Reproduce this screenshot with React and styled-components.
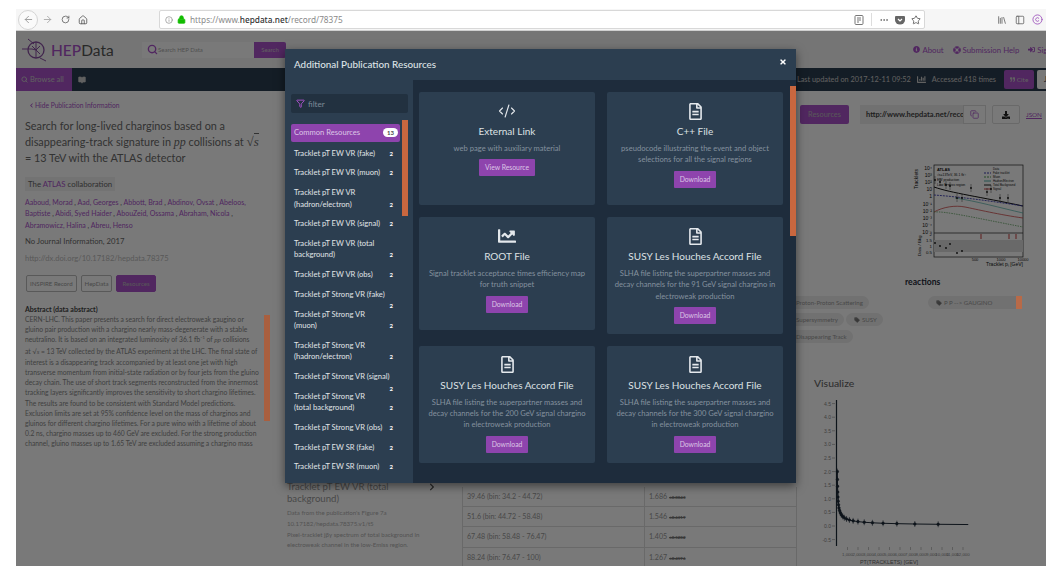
import React from "react";
import styled, { createGlobalStyle } from "styled-components";
import {
  ArrowLeft,
  ArrowRight,
  RotateCw,
  Home,
  Info,
  Lock,
  Star,
  Ellipsis,
  BookOpen,
  Search,
  Funnel,
  CodeXml,
  Copy,
  Tag,
  PanelLeft,
  Library,
  Copyright,
} from "lucide-react";
import {
  FaRegFileAlt,
  FaChartLine,
  FaTimes,
  FaInfoCircle,
  FaLifeRing,
  FaSignInAlt,
  FaQuoteRight,
  FaChartBar,
  FaDownload,
  FaChevronLeft,
  FaChevronRight,
} from "react-icons/fa";

const sans = `Lato, "Liberation Sans", sans-serif`;
const purple = "#aa52cb";

const GlobalStyle = createGlobalStyle`
  html, body {
    margin: 0;
    height: 100%;
    overflow: hidden;
    background: #fff;
  }
  * {
    box-sizing: border-box;
  }
  body {
    font-family: ${sans};
  }
`;

const Window = styled.div`
  width: 1046px;
  height: 566px;
  padding: 9px 0 0 16px;
  overflow: hidden;
  display: flex;
  flex-direction: column;
`;

/* browser toolbar */
const Toolbar = styled.div`
  height: 22px;
  flex: none;
  display: flex;
  align-items: center;
  background: #f6f6f6;
  border-bottom: 1px solid #cfcfcf;
  color: #555;
  font-family: "Noto Sans", sans-serif;
`;

const BackButton = styled.div`
  width: 20px;
  height: 20px;
  margin-left: 2px;
  border: 1px solid #d5d5d5;
  border-radius: 50%;
  background: #fafafa;
  display: flex;
  align-items: center;
  justify-content: center;
  color: #999;
`;

const NavGlyphs = styled.div`
  display: flex;
  align-items: center;
  gap: 8px;
  margin-left: 4px;
  width: 117px;
`;

const UrlBar = styled.div`
  width: 766px;
  height: 19px;
  background: #fff;
  border: 1px solid #d8d8d8;
  border-radius: 2px;
  display: flex;
  align-items: center;
  padding: 0 3px 0 5px;
  gap: 4px;
  font-size: 8.25px;
  color: #8a8a8a;
`;

const UrlText = styled.span`
  flex: 1;
  b {
    color: #333;
    font-weight: 500;
  }
`;

const Divider = styled.span`
  width: 1px;
  height: 13px;
  background: #ddd;
  margin: 0 3px;
`;

const RightGlyphs = styled.div`
  display: flex;
  align-items: center;
  gap: 7.5px;
  margin-left: 72px;
  color: #666;
`;

/* dimmed record page */
const Page = styled.div`
  position: relative;
  flex: 1;
  min-height: 0;
  overflow: hidden;
  background: #fff;
  color: #888;
`;

const Backdrop = styled.div`
  position: absolute;
  inset: 0;
  background: rgba(0, 0, 0, 0.525);
  z-index: 1;
`;

const Header = styled.header`
  height: 37px;
  display: flex;
  align-items: center;
  padding: 0 0 0 6px;
  background: #f6f6f6;
`;

const Brand = styled.div`
  display: flex;
  align-items: center;
  gap: 3px;
  width: 120px;
  font-size: 15.5px;
  color: #555;
  b {
    color: ${purple};
    font-weight: 500;
  }
`;

const SearchBox = styled.div`
  width: 112px;
  height: 16px;
  background: #fff;
  display: flex;
  align-items: center;
  padding-left: 5px;
  gap: 0;
  font-size: 6px;
  color: #aaa;
  svg {
    color: ${purple};
  }
`;

const SearchButton = styled.div`
  width: 32px;
  height: 16px;
  background: ${purple};
  color: #ccc;
  font-size: 6px;
  display: flex;
  align-items: center;
  justify-content: center;
  border-radius: 0 2px 2px 0;
`;

const HeaderLinks = styled.nav`
  margin-left: auto;
  display: flex;
  align-items: center;
  gap: 9px;
  margin-right: -14px;
  font-size: 7.8px;
  color: ${purple};
  span {
    display: flex;
    align-items: center;
    gap: 2px;
    white-space: nowrap;
  }
`;

const NavBar = styled.div`
  height: 23px;
  background: #2c3e50;
  display: flex;
  align-items: center;
  color: #ccc;
  font-size: 7.5px;
`;

const BrowseTab = styled.div`
  width: 56px;
  height: 100%;
  background: ${purple};
  display: flex;
  align-items: center;
  gap: 2px;
  padding-left: 5px;
  margin-right: 6px;
`;

const UpdateInfo = styled.div`
  margin-left: auto;
  display: flex;
  align-items: center;
  gap: 6px;
  font-size: 7.35px;
  white-space: nowrap;
`;

const CiteButton = styled.div`
  width: 30px;
  height: 19px;
  margin-left: 8px;
  background: ${purple};
  border-radius: 2px;
  display: flex;
  align-items: center;
  justify-content: center;
  gap: 2px;
  font-size: 6.5px;
`;

const StubButton = styled.div`
  width: 16px;
  height: 19px;
  margin: 0 -7px 0 3px;
  background: #fff;
  color: #333;
  border-radius: 2px;
  padding: 5px 0 0 7px;
  font-size: 7px;
`;

const Columns = styled.div`
  display: grid;
  grid-template-columns: 269px 512px 1fr;
`;

/* publication column */
const PublicationCol = styled.section`
  padding: 10px 22px 0 9px;
`;

const HideLink = styled.div`
  display: flex;
  align-items: center;
  gap: 1px;
  margin-left: 4px;
  font-size: 6.7px;
  line-height: 8px;
  color: ${purple};
`;

const Title = styled.h1`
  margin: 9px 0 0;
  font-size: 10.85px;
  line-height: 16px;
  font-weight: 400;
  color: #6a6a6a;
  white-space: nowrap;
  em {
    font-family: "Liberation Serif", serif;
    font-size: 12px;
  }
`;

const Root = styled.span`
  font-family: "Liberation Serif", serif;
  font-size: 13px;
  i {
    border-top: 1px solid #6a6a6a;
  }
`;

const Collaboration = styled.div`
  display: inline-block;
  margin-top: 11px;
  background: #f2f2f2;
  padding: 0 3px;
  font-size: 7.8px;
  line-height: 14px;
  color: #666;
  span {
    color: ${purple};
  }
`;

const Authors = styled.div`
  margin-top: 6px;
  font-size: 7px;
  line-height: 11.3px;
  color: ${purple};
  i {
    font-style: normal;
    color: #666;
  }
`;

const Journal = styled.div`
  margin-top: 5px;
  font-size: 7.7px;
  line-height: 11px;
  color: #6a6a6a;
`;

const Doi = styled.div`
  margin-top: 6px;
  font-size: 7.6px;
  line-height: 11px;
  color: #bbb;
`;

const PubButtons = styled.div`
  display: flex;
  gap: 4px;
  margin: 11px 0 0 1px;
`;

const PubButton = styled.div`
  height: 17px;
  padding: 0 ${(p) => (p.$active ? 5 : 3)}px;
  border: 1px solid #bbb;
  border-radius: 2px;
  font-size: 6.1px;
  line-height: 15px;
  white-space: nowrap;
  color: ${(p) => (p.$active ? "#bbb" : "#999")};
  background: ${(p) => (p.$active ? purple : "transparent")};
  border-color: ${(p) => (p.$active ? purple : "#bbb")};
`;

const AbstractTitle = styled.h4`
  margin: 12px 0 0;
  font-size: 7px;
  line-height: 10px;
  font-weight: 700;
  color: #444;
`;

const AbstractBody = styled.p`
  margin: 0;
  font-size: 6.72px;
  line-height: 10.2px;
  color: #888;
  white-space: nowrap;
  i {
    font-family: "Liberation Serif", serif;
  }
  sup {
    font-size: 4px;
    line-height: 0;
  }
`;

const PageThumb = styled.div`
  position: absolute;
  left: 248px;
  top: 284px;
  width: 6px;
  height: 106px;
  background: #a95f3f;
  z-index: 2;
`;

/* table column */
const TableCol = styled.section`
  padding: 390px 0 0 2px;
  display: flex;
`;

const TableInfo = styled.div`
  width: 175px;
  position: relative;
`;

const TableTitle = styled.h3`
  margin: 0;
  width: 125px;
  font-size: 9.6px;
  line-height: 12px;
  font-weight: 400;
  color: #999;
`;

const TableChevron = styled(FaChevronRight)`
  position: absolute;
  left: 141px;
  top: 2px;
  color: #555;
`;

const TableNote = styled.p`
  margin: 3px 0 0;
  width: 140px;
  font-size: 6.15px;
  line-height: 10.8px;
  color: #b0b0b0;
`;

const DataTable = styled.div`
  margin-top: 5.6px;
  width: 335px;
  flex: none;
`;

const DataRow = styled.div`
  display: grid;
  grid-template-columns: 181px 1fr;
  height: 20.4px;
  border: 1px solid #ddd;
  border-top: 0;
  font-size: 7.1px;
  color: #999;
  > div {
    padding-left: 4px;
    line-height: 19px;
  }
  > div + div {
    border-left: 1px solid #ddd;
  }
  small {
    font-size: 4.4px;
    font-weight: 700;
    margin-left: 2px;
    color: #777;
    text-decoration: line-through;
  }
`;

/* resources column */
const ResourcesCol = styled.section`
  padding: 14px 0 0 3px;
`;

const ActionRow = styled.div`
  display: flex;
  align-items: center;
  height: 19px;
`;

const ResourcesButton = styled.div`
  width: 49px;
  height: 19px;
  border-radius: 2px;
  background: ${purple};
  color: #bbb;
  font-size: 7.4px;
  display: flex;
  align-items: center;
  justify-content: center;
`;

const CitationField = styled.div`
  margin-left: 11px;
  width: 103px;
  height: 19px;
  background: #eee;
  font-size: 7.5px;
  font-weight: 700;
  color: #444;
  padding-left: 6px;
  line-height: 19px;
  overflow: hidden;
  white-space: nowrap;
`;

const CopyBox = styled.div`
  width: 23px;
  height: 19px;
  border: 1px solid #ddd;
  display: flex;
  align-items: center;
  justify-content: center;
  color: ${purple};
`;

const DownloadBox = styled.div`
  width: 28px;
  height: 19px;
  margin-left: 6px;
  border: 1px solid #ddd;
  border-radius: 2px;
  display: flex;
  align-items: center;
  justify-content: center;
  color: #222;
`;

const JsonLink = styled.span`
  margin-left: 6px;
  font-size: 6.3px;
  color: ${purple};
  text-decoration: underline;
`;

const PlotFigure = styled.svg`
  display: block;
  margin: 39px 0 0 111px;
  font-family: "Liberation Sans", sans-serif;
`;

const ReactionsHeading = styled.h4`
  margin: 6px 0 0 105px;
  font-size: 8.6px;
  line-height: 11px;
  font-weight: 700;
  color: #1f2c3a;
`;

const KeywordArea = styled.div`
  position: relative;
  margin: 8px 0 0 -18px;
  display: flex;
  flex-direction: column;
  gap: 4px;
  align-items: flex-start;
`;

const KeywordRow = styled.div`
  display: flex;
  gap: 2px;
`;

const Pill = styled.div`
  height: 13px;
  padding: 0 6px 0 ${(p) => (p.$tagged ? 8 : 14)}px;
  border-radius: 7px;
  background: #eee;
  font-size: 6.1px;
  line-height: 13px;
  color: #999;
  display: flex;
  align-items: center;
  gap: 2px;
  white-space: nowrap;
`;

const ReactionPill = styled(Pill)`
  position: absolute;
  left: 146px;
  top: 0;
  width: 94px;
  padding: 0 0 0 8px;
`;

const ReactionThumb = styled.div`
  position: absolute;
  right: 0;
  top: 0;
  width: 6px;
  height: 13px;
  background: #b86a48;
  z-index: 2;
`;

const VisualizeHeading = styled.h4`
  margin: 33.5px 0 0 14px;
  font-size: 10.4px;
  line-height: 13px;
  font-weight: 500;
  color: #666;
`;

const ChartSvg = styled.svg`
  display: block;
  margin: 4px 0 0 20px;
  font-family: "Liberation Sans", sans-serif;
`;

/* modal dialog */
const Modal = styled.div`
  position: absolute;
  left: 269px;
  top: 18px;
  width: 511px;
  height: 434px;
  background: #2c3e50;
  box-shadow: 0 3px 9px rgba(0, 0, 0, 0.5);
  z-index: 3;
  display: flex;
  flex-direction: column;
  overflow: hidden;
`;

const ModalHeader = styled.div`
  position: relative;
  height: 31px;
  flex: none;
  padding: 9px 0 0 9px;
  font-size: 9.85px;
  line-height: 12px;
  font-weight: 500;
  color: #dfe3e6;
`;

const CloseIcon = styled(FaTimes)`
  position: absolute;
  right: 9px;
  top: 9px;
  color: #fff;
`;

const ModalBody = styled.div`
  position: relative;
  flex: 1;
  min-height: 0;
  display: flex;
`;

const Sidebar = styled.aside`
  position: relative;
  width: 128px;
  flex: none;
  padding: 14px 0 0 6px;
`;

const FilterBox = styled.div`
  width: 117px;
  height: 19px;
  background: #223140;
  border-radius: 2px;
  display: flex;
  align-items: center;
  gap: 3px;
  padding-left: 5px;
  font-size: 8.2px;
  color: #7d8a97;
  svg {
    color: ${purple};
  }
`;

const ResourceList = styled.div`
  margin-top: 11px;
  width: 109px;
`;

const ResourceItem = styled.div`
  padding: ${(p) => (p.$active ? "3px" : "4.12px")} 7px ${(p) => (p.$active ? "3px" : "4.12px")} 3px;
  border-radius: 2px;
  font-size: 7.6px;
  line-height: 11.5px;
  white-space: pre-line;
  color: ${(p) => (p.$active ? "#dcc6e6" : "#e0e4e7")};
  background: ${(p) => (p.$active ? "#8e44ad" : "transparent")};
  margin-bottom: ${(p) => (p.$active ? 2 : 0)}px;
`;

const ItemBadge = styled.span`
  float: right;
  width: ${(p) => (p.$active ? 15 : 9)}px;
  margin-right: ${(p) => (p.$active ? -5 : 0)}px;
  height: 9px;
  border-radius: 5px;
  text-align: ${(p) => (p.$active ? "center" : "right")};
  font-size: 6px;
  line-height: 9px;
  font-weight: 700;
  margin-top: 1px;
  color: ${(p) => (p.$active ? "#444" : "#fff")};
  background: ${(p) => (p.$active ? "#fff" : "transparent")};
`;

const SideThumb = styled.div`
  position: absolute;
  left: 117px;
  top: 40px;
  width: 6px;
  height: 96px;
  background: #c9673f;
`;

const CardPanel = styled.div`
  flex: 1;
  background: #1e2c3c;
  padding: 12px 0 0 6px;
  display: grid;
  grid-template-columns: 176px 176px;
  grid-auto-rows: min-content;
  gap: 12px;
  align-items: start;
`;

const Card = styled.article`
  min-height: 113px;
  background: #2c3e50;
  border-radius: 2px;
  padding: 10px 6px 10px;
  display: flex;
  flex-direction: column;
  align-items: center;
  text-align: center;
`;

const CardIcon = styled.div`
  height: 18px;
  display: flex;
  align-items: center;
  color: #e4e8ec;
`;

const CardTitle = styled.h3`
  margin: 3px 0 0;
  font-size: 10px;
  line-height: 16px;
  font-weight: 400;
  color: #dde1e4;
`;

const CardText = styled.p`
  margin: 4px 0 0;
  font-size: 7.6px;
  line-height: 11.3px;
  color: #84919e;
`;

const CardButton = styled.div`
  margin-top: 5px;
  height: 17px;
  padding: 0 6px;
  background: #8e44ad;
  border-radius: 1px;
  font-size: 6.8px;
  line-height: 17px;
  color: #dcc6e6;
`;

const PanelThumb = styled.div`
  position: absolute;
  right: 0;
  top: 6px;
  width: 6px;
  height: 150px;
  background: #c9673f;
`;

const RESOURCES = [
  "Tracklet pT EW VR (fake)",
  "Tracklet pT EW VR (muon)",
  "Tracklet pT EW VR (hadron/electron)",
  "Tracklet pT EW VR (signal)",
  "Tracklet pT EW VR (total background)",
  "Tracklet pT EW VR (obs)",
  "Tracklet pT Strong VR (fake)",
  "Tracklet pT Strong VR\n(muon)",
  "Tracklet pT Strong VR (hadron/electron)",
  "Tracklet pT Strong VR (signal)",
  "Tracklet pT Strong VR\n(total background)",
  "Tracklet pT Strong VR (obs)",
  "Tracklet pT EW SR (fake)",
  "Tracklet pT EW SR (muon)",
];

const CARDS = [
  {
    icon: <CodeXml size={18} strokeWidth={1.5} />,
    title: "External Link",
    text: "web page with auxiliary material",
    action: "View Resource",
  },
  {
    icon: <FaRegFileAlt size={17} />,
    title: "C++ File",
    text: "pseudocode illustrating the event and object selections for all the signal regions",
  },
  {
    icon: <FaChartLine size={18} />,
    title: "ROOT File",
    text: "Signal tracklet acceptance times efficiency map for truth snippet",
  },
  {
    icon: <FaRegFileAlt size={17} />,
    title: "SUSY Les Houches Accord File",
    text: "SLHA file listing the superpartner masses and decay channels for the 91 GeV signal chargino in electroweak production",
  },
  {
    icon: <FaRegFileAlt size={17} />,
    title: "SUSY Les Houches Accord File",
    text: "SLHA file listing the superpartner masses and decay channels for the 200 GeV signal chargino in electroweak production",
  },
  {
    icon: <FaRegFileAlt size={17} />,
    title: "SUSY Les Houches Accord File",
    text: "SLHA file listing the superpartner masses and decay channels for the 300 GeV signal chargino in electroweak production",
  },
];

const ROWS = [
  ["39.46 (bin: 34.2 - 44.72)", "1.686", "±0.8843"],
  ["51.6 (bin: 44.72 - 58.48)", "1.546", "±0.6319"],
  ["67.48 (bin: 58.48 - 76.47)", "1.405", "±0.5282"],
  ["88.24 (bin: 76.47 - 100)", "1.267", "±0.4596"],
];

const AUTHORS = [
  "Aaboud, Morad",
  "Aad, Georges",
  "Abbott, Brad",
  "Abdinov, Ovsat",
  "Abeloos, Baptiste",
  "Abidi, Syed Haider",
  "AbouZeid, Ossama",
  "Abraham, Nicola",
  "Abramowicz, Halina",
  "Abreu, Henso",
];

// the atom-and-orbit mark beside the site name
function Logo() {
  return (
    <svg width="26" height="28" viewBox="0 0 26 28" fill="none" stroke="#8a4fa3" strokeWidth="1">
      <circle cx="14" cy="14" r="8" strokeWidth="1.3" />
      <path d="M0 13h10l4 1 4-4M10 10l8 8M14 6v16M6 3l6 5M18 22l6 3" />
    </svg>
  );
}

function ReaderIcon() {
  return (
    <svg width="10" height="10" viewBox="0 0 10 10" fill="none" stroke="#777" strokeWidth="1">
      <rect x="1" y="0.5" width="8" height="9" rx="1" />
      <path d="M3 3h4M3 5h4M3 7h2" />
    </svg>
  );
}

function PocketIcon() {
  return (
    <svg width="10" height="10" viewBox="0 0 10 10" style={{ marginLeft: 2 }}>
      <path d="M1 1h8a1 1 0 0 1 1 1v3a5 4.5 0 0 1-10 0V2a1 1 0 0 1 1-1z" fill="#666" />
      <path d="M3 4l2 2 2-2" fill="none" stroke="#fff" strokeWidth="1.2" />
    </svg>
  );
}

// log plot of tracklet pT with the ratio panel underneath
function AtlasPlot() {
  const yLabels = ["10⁴", "10³", "10²", "10", "1", "10⁻¹", "10⁻²", "10⁻³", "10⁻⁴", "10⁻⁵"];
  const ratioLabels = [["2", 73], ["1.5", 79], ["1", 85], ["0.5", 91]];
  const points = [
    [27, 17], [32, 19], [38, 22], [42, 23], [49, 35], [54, 35], [63, 25], [79, 29], [83, 26], [92, 35], [100, 35], [129, 36],
  ];
  const ratio = [[27, 80], [32, 83], [38, 85], [42, 81], [49, 90], [54, 88]];
  const legend = ["Data", "Fake tracklet", "Muon", "Hadron/Electron", "Total Background", "Signal"];
  return (
    <PlotFigure width="122" height="108" viewBox="0 0 122 108">
      <text x="0" y="0" transform="translate(7 26) rotate(-90)" fontSize="5" fill="#111">Tracklets</text>
      {yLabels.map((l, i) => (
        <text key={l} x="21" y={7 + i * 7.1} fontSize="5" textAnchor="end" fill="#111">{l}</text>
      ))}
      {ratioLabels.map(([l, y]) => (
        <text key={l} x="21" y={y} fontSize="4.4" textAnchor="end" fill="#111">{l}</text>
      ))}
      <rect x="23" y="2" width="89" height="92" fill="none" stroke="#222" strokeWidth="0.7" />
      <line x1="23" y1="70" x2="112" y2="70" stroke="#222" strokeWidth="0.7" />
      <rect x="23" y="77" width="89" height="12" fill="#ddd" />
      <text x="26" y="8" fontSize="4" fontWeight="700" fill="#111">ATLAS</text>
      <text x="26" y="13" fontSize="3.4" fill="#111">√s=13TeV, 36.1 fb⁻¹</text>
      <text x="26" y="18" fontSize="3.4" fill="#111">EW production</text>
      <text x="26" y="23" fontSize="3.4" fill="#111">Low Eᵀmiss region</text>
      {legend.map((l, i) => (
        <text key={l} x="82" y={7 + i * 4} fontSize="2.9" fill="#111">{l}</text>
      ))}
      <path d="M73 10h7" stroke="#3a3ab0" strokeDasharray="2 1" />
      <path d="M73 14h7" stroke="#4f9a4f" strokeDasharray="2 1" />
      <path d="M73 18h7" stroke="#4fb0a8" />
      <path d="M73 22h7" stroke="#222" />
      <path d="M73 26h7" stroke="#d04a4a" />
      <path d="M23 24C40 30 70 34 112 43" stroke="#111" strokeWidth="1" fill="none" />
      <path d="M23 32C50 34 80 38 112 43" stroke="#3a3ab0" strokeWidth="0.9" strokeDasharray="2 1" fill="none" />
      <path d="M44 35C65 38 90 45 112 50" stroke="#4fb0a8" strokeWidth="0.7" fill="none" />
      <path d="M23 49C32 44 44 42 54 44S90 52 112 55" stroke="#d04a4a" strokeWidth="0.8" fill="none" />
      <path d="M23 49C34 48 60 54 112 64" stroke="#4f9a4f" strokeWidth="0.7" strokeDasharray="1.5 1" fill="none" />
      {points.map(([x, y]) => (
        <g key={x}>
          <line x1={x - 3} x2={x - 3} y1={y - 4} y2={y + 4} stroke="#111" strokeWidth="0.4" />
          <circle cx={x - 3} cy={y} r="0.9" fill="#111" />
        </g>
      ))}
      {ratio.map(([x, y]) => (
        <circle key={x} cx={x - 3} cy={y} r="0.9" fill="#111" />
      ))}
      <path d="M70 71v5M98 71v5M105 71v5" stroke="#c83a3a" strokeWidth="1" />
      <text x="64" y="98" fontSize="4" textAnchor="middle" fill="#111">500</text>
      <text x="90" y="98" fontSize="4" textAnchor="middle" fill="#111">1000</text>
      <text x="112" y="98" fontSize="4" textAnchor="middle" fill="#111">10000</text>
      <text x="112" y="103" fontSize="5" textAnchor="end" fill="#111">Tracklet pₜ [GeV]</text>
      <text x="0" y="0" transform="translate(10 93) rotate(-90)" fontSize="4.4" fill="#111">Data / Bkg</text>
    </PlotFigure>
  );
}

function VisualizeChart() {
  const xFor = (v) => 17 + v * 0.0105;
  const yFor = (v) => 132 - v * 27.2;
  const samples = Array.from({ length: 23 }, (_, i) => 30 * Math.pow(1.3, i));
  const curve = (x) => 2 * Math.pow(x / 30, -0.6);
  const yTicks = [4.5, 4, 3.5, 3, 2.5, 2, 1.5, 1, 0.5, 0, -0.5];
  const xTicks = [1000, 2000, 3000, 4000, 5000, 6000, 7000, 8000, 9000, 10000, 11000, 12000];
  const line = [...samples, 12500].map((s) => `${xFor(s)},${yFor(curve(s))}`).join(" ");
  return (
    <ChartSvg width="200" height="172" viewBox="0 0 200 172">
      {yTicks.map((t) => (
        <g key={t}>
          <text x="11" y={yFor(t) + 2} fontSize="5" textAnchor="end" fill="#888">{t.toFixed(1)}</text>
          <line x1="12" x2="15" y1={yFor(t)} y2={yFor(t)} stroke="#888" strokeWidth="0.6" />
        </g>
      ))}
      <line x1="16.5" x2="16.5" y1="6" y2="152" stroke="#1d2a38" strokeWidth="1.2" />
      {xTicks.map((t) => (
        <g key={t}>
          <line x1={xFor(t)} x2={xFor(t)} y1="153" y2="156" stroke="#888" strokeWidth="0.5" />
          <text x={xFor(t)} y="162" fontSize="4.4" textAnchor="middle" fill="#888">{t.toLocaleString("en-US")}</text>
        </g>
      ))}
      <polyline points={line} fill="none" stroke="#1d2a38" strokeWidth="1" />
      {samples.map((s) => (
        <g key={s} fill="#1d2a38" stroke="#1d2a38" strokeWidth="0.6">
          <circle cx={xFor(s)} cy={yFor(curve(s))} r="1.3" />
          <line x1={xFor(s)} x2={xFor(s)} y1={yFor(curve(s)) - 3} y2={yFor(curve(s)) + 3} />
        </g>
      ))}
      <text x="69" y="170" fontSize="5.4" textAnchor="middle" fill="#666">PT(TRACKLETS) [GEV]</text>
    </ChartSvg>
  );
}

export default function App() {
  return (
    <Window>
      <GlobalStyle />
      <Toolbar>
        <BackButton>
          <ArrowLeft size={11} />
        </BackButton>
        <NavGlyphs>
          <ArrowRight size={11} color="#aaa" />
          <RotateCw size={9} />
          <Home size={10} />
        </NavGlyphs>
        <UrlBar>
          <Info size={8} color="#888" />
          <Lock size={9} color="#12bc00" fill="#12bc00" />
          <UrlText>
            https://www.<b>hepdata.net</b>/record/78375
          </UrlText>
          <ReaderIcon />
          <Divider />
          <Ellipsis size={10} color="#666" />
          <PocketIcon />
          <Star size={10} color="#555" style={{ marginLeft: 2 }} />
        </UrlBar>
        <RightGlyphs>
          <Library size={10} />
          <PanelLeft size={10} />
          <Copyright size={11} color="#a35cc0" />
        </RightGlyphs>
      </Toolbar>

      <Page>
        <Header>
          <Brand>
            <Logo />
            <span>
              <b>HEP</b>Data
            </span>
          </Brand>
          <SearchBox>
            <Search size={11} strokeWidth={3} />
            Search HEP Data
          </SearchBox>
          <SearchButton>Search</SearchButton>
          <HeaderLinks>
            <span>
              <FaInfoCircle size={7} /> About
            </span>
            <span>
              <FaLifeRing size={8} /> Submission Help
            </span>
            <span>
              <FaSignInAlt size={7} /> Sign in
            </span>
          </HeaderLinks>
        </Header>

        <NavBar>
          <BrowseTab>
            <Search size={7} strokeWidth={3} /> Browse all
          </BrowseTab>
          <BookOpen size={8} fill="#ccc" />
          <UpdateInfo>
            <span>Last updated on 2017-12-11 09:52</span>
            <FaChartBar size={9} />
            <span>Accessed 418 times</span>
          </UpdateInfo>
          <CiteButton>
            <FaQuoteRight size={5} /> Cite
          </CiteButton>
          <StubButton>J</StubButton>
        </NavBar>

        <Columns>
          <PublicationCol>
            <HideLink>
              <FaChevronLeft size={5} /> Hide Publication Information
            </HideLink>
            <Title>
              Search for long-lived charginos based on a
              <br />
              disappearing-track signature in <em>pp</em> collisions at{" "}
              <Root>
                √<i>s</i>
              </Root>
              <br />= 13 TeV with the ATLAS detector
            </Title>
            <Collaboration>
              The <span>ATLAS</span> collaboration
            </Collaboration>
            <Authors>
              {AUTHORS.map((name, i) => (
                <React.Fragment key={name}>
                  {name}
                  {i < AUTHORS.length - 1 && <i> , </i>}
                </React.Fragment>
              ))}
            </Authors>
            <Journal>No Journal Information, 2017</Journal>
            <Doi>http://dx.doi.org/10.17182/hepdata.78375</Doi>
            <PubButtons>
              <PubButton>INSPIRE Record</PubButton>
              <PubButton>HepData</PubButton>
              <PubButton $active>Resources</PubButton>
            </PubButtons>
            <AbstractTitle>Abstract (data abstract)</AbstractTitle>
            <AbstractBody>
              CERN-LHC. This paper presents a search for direct electroweak gaugino or
              <br />
              gluino pair production with a chargino nearly mass-degenerate with a stable
              <br />
              neutralino. It is based on an integrated luminosity of 36.1 fb<sup>−1</sup> of <i>pp</i> collisions
              <br />
              at √<i>s</i> = 13 TeV collected by the ATLAS experiment at the LHC. The final state of
              <br />
              interest is a disappearing track accompanied by at least one jet with high
              <br />
              transverse momentum from initial-state radiation or by four jets from the gluino
              <br />
              decay chain. The use of short track segments reconstructed from the innermost
              <br />
              tracking layers significantly improves the sensitivity to short chargino lifetimes.
              <br />
              The results are found to be consistent with Standard Model predictions.
              <br />
              Exclusion limits are set at 95% confidence level on the mass of charginos and
              <br />
              gluinos for different chargino lifetimes. For a pure wino with a lifetime of about
              <br />
              0.2 ns, chargino masses up to 460 GeV are excluded. For the strong production
              <br />
              channel, gluino masses up to 1.65 TeV are excluded assuming a chargino mass
            </AbstractBody>
          </PublicationCol>

          <TableCol>
            <TableInfo>
              <TableTitle>Tracklet pT EW VR (total background)</TableTitle>
              <TableChevron size={8} />
              <TableNote>
                Data from the publication's Figure 7a
                <br />
                10.17182/hepdata.78375.v1/t5
                <br />
                Pixel-tracklet jβγ spectrum of total background in electroweak channel in the low-Emiss region.
              </TableNote>
            </TableInfo>
            <DataTable>
              {ROWS.map(([bin, value, err]) => (
                <DataRow key={bin}>
                  <div>{bin}</div>
                  <div>
                    {value}
                    <small>{err}</small>
                  </div>
                </DataRow>
              ))}
            </DataTable>
          </TableCol>

          <ResourcesCol>
            <ActionRow>
              <ResourcesButton>Resources</ResourcesButton>
              <CitationField>http://www.hepdata.net/record/78375</CitationField>
              <CopyBox>
                <Copy size={9} />
              </CopyBox>
              <DownloadBox>
                <FaDownload size={8} />
              </DownloadBox>
              <JsonLink>JSON</JsonLink>
            </ActionRow>
            <AtlasPlot />
            <ReactionsHeading>reactions</ReactionsHeading>
            <KeywordArea>
              <Pill>Proton-Proton Scattering</Pill>
              <ReactionPill $tagged>
                <Tag size={6} fill="#777" /> P P --&gt; GAUGINO
                <ReactionThumb />
              </ReactionPill>
              <KeywordRow>
                <Pill>Supersymmetry</Pill>
                <Pill $tagged>
                  <Tag size={6} fill="#777" /> SUSY
                </Pill>
              </KeywordRow>
              <Pill>Disappearing Track</Pill>
            </KeywordArea>
            <VisualizeHeading>Visualize</VisualizeHeading>
            <VisualizeChart />
          </ResourcesCol>
        </Columns>

        <PageThumb />
        <Backdrop />

        <Modal>
          <ModalHeader>
            Additional Publication Resources
            <CloseIcon size={8} />
          </ModalHeader>
          <ModalBody>
            <Sidebar>
              <FilterBox>
                <Funnel size={9} strokeWidth={2.5} /> filter
              </FilterBox>
              <ResourceList>
                <ResourceItem $active>
                  <ItemBadge $active>13</ItemBadge>
                  Common Resources
                </ResourceItem>
                {RESOURCES.map((name) => (
                  <ResourceItem key={name}>
                    {name}
                    <ItemBadge>2</ItemBadge>
                  </ResourceItem>
                ))}
              </ResourceList>
              <SideThumb />
            </Sidebar>
            <CardPanel>
              {CARDS.map((card, i) => (
                <Card key={i}>
                  <CardIcon>{card.icon}</CardIcon>
                  <CardTitle>{card.title}</CardTitle>
                  <CardText>{card.text}</CardText>
                  <CardButton>{card.action || "Download"}</CardButton>
                </Card>
              ))}
            </CardPanel>
            <PanelThumb />
          </ModalBody>
        </Modal>
      </Page>
    </Window>
  );
}
